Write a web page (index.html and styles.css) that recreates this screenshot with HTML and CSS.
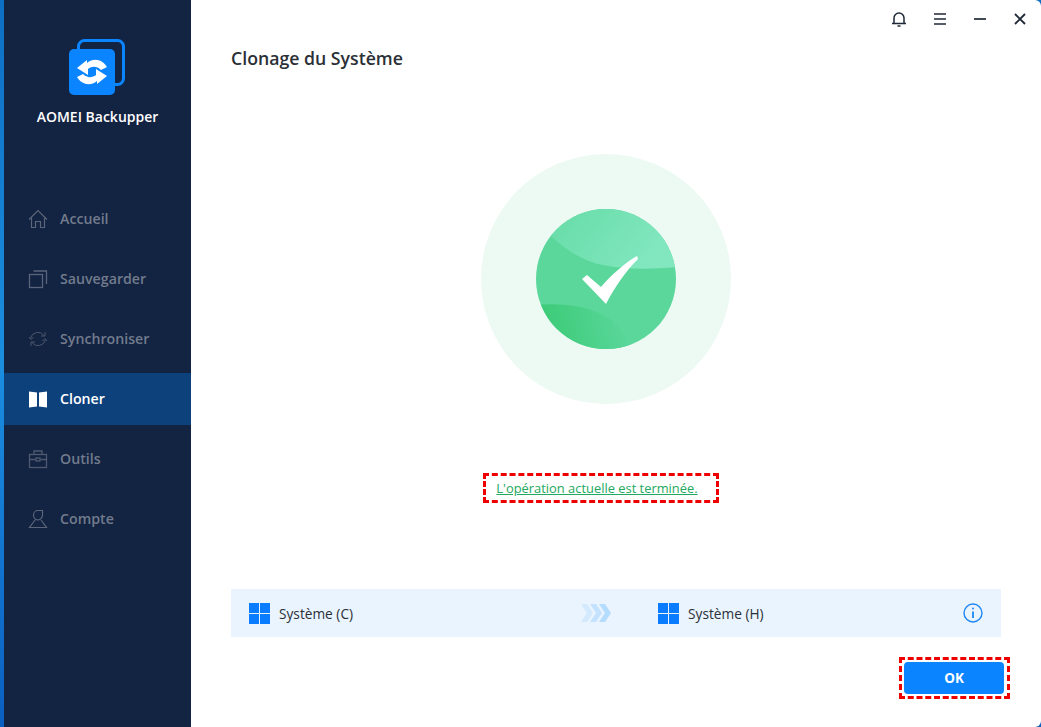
FILE: index.html
```html
<!DOCTYPE html>
<html lang="fr">
<head>
    <meta charset="UTF-8">
    <title>AOMEI Backupper</title>
    <link rel="stylesheet" href="styles.css">
</head>
<body>
    <div class="window">
        <aside class="sidebar">
            <div class="brand">
                <svg class="brand-logo" width="56" height="56" viewBox="0 0 56 56">
                    <rect x="9.500" y="1.500" width="45" height="44" rx="6" fill="none" stroke="#0a84ff" stroke-width="3"/>
                    <rect x="0" y="10" width="46" height="46" rx="5" fill="#0a84ff"/>
                    <path d="M8 29 18 21v3C25 18 34 21 38 28l-6 3c-4-4-9-4-13-1v6z" fill="#fff"/>
                    <path d="M8 29 18 21v3C25 18 34 21 38 28l-6 3c-4-4-9-4-13-1v6z" fill="#fff" transform="rotate(180 23 33)"/>
                </svg>
                <div class="brand-name">AOMEI Backupper</div>
            </div>
            <nav class="nav">
                <a class="nav-item">
                    <svg width="20" height="20" viewBox="0 0 20 20" fill="none" stroke="#5a6579" stroke-width="1.200">
                        <path d="M1 10.500 10 1.500l9 9M3.500 9v9.500h4v-6h5v6h4V9"/>
                    </svg>
                    <span>Accueil</span>
                </a>
                <a class="nav-item">
                    <svg width="20" height="20" viewBox="0 0 20 20" fill="none" stroke="#5a6579" stroke-width="1.300">
                        <rect x="1.500" y="5.500" width="13" height="13"/>
                        <path d="M5.500 2h13v13"/>
                    </svg>
                    <span>Sauvegarder</span>
                </a>
                <a class="nav-item">
                    <svg width="20" height="20" viewBox="0 0 20 20" fill="none" stroke="#4b566b" stroke-width="1">
                        <path d="M2.500 9.500A7.500 7.500 0 0 1 16 6.500M17.500 10.500A7.500 7.500 0 0 1 4 13.500"/>
                        <path d="M13 7h4V3M7 13H3v4M1 8l2 2.500L5.500 8M19 12l-2-2.500-2.500 2.500"/>
                    </svg>
                    <span>Synchroniser</span>
                </a>
                <a class="nav-item active">
                    <svg width="20" height="20" viewBox="0 0 20 20" fill="#fff">
                        <path d="M1 2.500 9 3.500v14l-8 1zM11 3.500l8-1v16l-8-1z"/>
                    </svg>
                    <span>Cloner</span>
                </a>
                <a class="nav-item">
                    <svg width="20" height="20" viewBox="0 0 20 20" fill="none" stroke="#4f5a70" stroke-width="1.300">
                        <rect x="1.500" y="5.500" width="17" height="13"/>
                        <path d="M6 5.500V2h8v3.500M1.500 10.500h6M12.500 10.500h6"/>
                        <rect x="8" y="9" width="4" height="3"/>
                    </svg>
                    <span>Outils</span>
                </a>
                <a class="nav-item">
                    <svg width="20" height="20" viewBox="0 0 20 20" fill="none" stroke="#5a6579" stroke-width="1.200">
                        <path d="M14.500 1.500H10a4.500 4.500 0 0 0-4.500 4.500c0 3 2 5 4.500 5s4.500-2.500 4.500-5zM7 11 1.500 18.500h17L13 11"/>
                    </svg>
                    <span>Compte</span>
                </a>
            </nav>
        </aside>
        <main class="main">
            <div class="titlebar">
                <svg width="16" height="16" viewBox="0 0 16 16" fill="none" stroke="#1f2937" stroke-width="1.500">
                    <path d="M1 12.500h14M3 12.500V7a5 5 0 0 1 10 0v5.500M6.500 15h3"/>
                </svg>
                <svg width="14" height="14" viewBox="0 0 14 14" fill="none" stroke="#1f2937" stroke-width="1.700">
                    <path d="M1 2h12M1 7h12M1 12h12"/>
                </svg>
                <svg width="14" height="14" viewBox="0 0 14 14" fill="none" stroke="#1f2937" stroke-width="1.700">
                    <path d="M1 7h12"/>
                </svg>
                <svg width="14" height="14" viewBox="0 0 14 14" fill="none" stroke="#1f2937" stroke-width="1.900">
                    <path d="M2 2l10 10M12 2 2 12"/>
                </svg>
            </div>
            <h1 class="page-title">Clonage du Système</h1>
            <div class="result">
                <svg class="result-icon" width="250" height="250" viewBox="0 0 250 250">
                    <defs>
                        <clipPath id="disc"><circle cx="125" cy="125" r="70"/></clipPath>
                        <linearGradient id="waveTop" x1="0" y1="0" x2="1" y2="0.500">
                            <stop offset="0" stop-color="#62daa4"/>
                            <stop offset="1" stop-color="#82e7bf"/>
                        </linearGradient>
                        <linearGradient id="waveBottom" x1="0.200" y1="0.500" x2="0.900" y2="0.400">
                            <stop offset="0" stop-color="#3ecc7a"/>
                            <stop offset="1" stop-color="#5bd79c"/>
                        </linearGradient>
                    </defs>
                    <circle cx="125" cy="125" r="125" fill="#edfaf4"/>
                    <circle cx="125" cy="125" r="70" fill="#5bd79c"/>
                    <g clip-path="url(#disc)">
                        <path d="M69 81c15 15 35 27 53 30 25 5 50 4 76 2V30H69z" fill="url(#waveTop)"/>
                        <path d="M58 151c20-2 52 0 72 15 15 12 25 30 30 50H50z" fill="url(#waveBottom)"/>
                    </g>
                    <path d="M101 125l5-4 14 12c10-12 24-24 36-31l1 3c-12 12-24 29-32 45z" fill="#fff"/>
                </svg>
                <div class="result-note">
                    <a class="result-link">L'opération actuelle est terminée.</a>
                </div>
            </div>
            <div class="clone-bar">
                <div class="clone-side">
                    <svg width="21" height="21" viewBox="0 0 21 21" fill="#0a7cff">
                        <path d="M0 0h10v10H0zM11 0h10v10H11zM0 11h10v10H0zM11 11h10v10H11z"/>
                    </svg>
                    <span>Système (C)</span>
                </div>
                <svg class="clone-arrows" width="30" height="18" viewBox="0 0 30 18">
                    <path d="M0 0h6l6 9-6 9H0l6-9z" fill="#d3e9fe"/>
                    <path d="M9 0h6l6 9-6 9H9l6-9z" fill="#c4e2fe"/>
                    <path d="M18 0h6l6 9-6 9h-6l6-9z" fill="#b4dcfe"/>
                </svg>
                <div class="clone-side">
                    <svg width="21" height="21" viewBox="0 0 21 21" fill="#0a7cff">
                        <path d="M0 0h10v10H0zM11 0h10v10H11zM0 11h10v10H0zM11 11h10v10H11z"/>
                    </svg>
                    <span>Système (H)</span>
                </div>
                <svg class="clone-info" width="20" height="20" viewBox="0 0 20 20" fill="none" stroke="#1f87f0" stroke-width="1.400">
                    <circle cx="10" cy="10" r="9"/>
                    <path d="M10 8.500V15" stroke-width="1.800"/>
                    <circle cx="10" cy="5.500" r="1" fill="#1f87f0" stroke="none"/>
                </svg>
            </div>
            <div class="actions">
                <div class="ok-mark">
                    <button class="ok-btn">OK</button>
                </div>
            </div>
        </main>
    </div>
</body>
</html>
```

FILE: styles.css
```css
* {
    box-sizing: border-box;
}

body {
    margin: 0;
    height: 727px;
    overflow: hidden;
    background: linear-gradient(180deg, #0d6fc4 0%, #1b8ee0 50%, #0a5fc0 100%);
    font-family: "Open Sans", "Noto Sans", sans-serif;
}

.window {
    display: flex;
    height: 727px;
    margin-left: 4px;
}

.sidebar {
    width: 187px;
    flex-shrink: 0;
    background: #132342;
}

.brand {
    display: flex;
    flex-direction: column;
    align-items: center;
    padding-top: 39px;
}

.brand-logo {
    display: block;
    margin-right: 1px;
}

.brand-name {
    margin-top: 12px;
    color: #fff;
    font-size: 14px;
    font-weight: 600;
    line-height: 20px;
}

.nav {
    display: flex;
    flex-direction: column;
    gap: 8px;
    margin-top: 66px;
}

.nav-item {
    display: flex;
    align-items: center;
    gap: 12px;
    height: 52px;
    padding-left: 24px;
    color: #717b8c;
    font-size: 14.200px;
    font-weight: 600;
}

.nav-item span {
    margin-bottom: 1px;
}

.nav-item.active {
    background: #0c417c;
    color: #fff;
}

.main {
    flex: 1;
    display: flex;
    flex-direction: column;
    padding: 0 40px;
    background: #fff;
    border-radius: 0 6px 6px 0;
}

.titlebar {
    display: flex;
    justify-content: flex-end;
    align-items: center;
    gap: 26px;
    height: 38px;
    margin-right: -26px;
}

.page-title {
    margin: 8px 0 0;
    color: #2b2f36;
    font-size: 17.700px;
    font-weight: 600;
    line-height: 24px;
}

.result {
    display: flex;
    flex-direction: column;
    align-items: center;
    margin-top: 84px;
    padding-right: 20px;
}

.result-icon {
    display: block;
}

.result-note {
    margin: 69px 10px 0 0;
    width: 236px;
    height: 30px;
    padding: 0 8px 1px 0;
    border: 3px dashed #ee0000;
    display: flex;
    align-items: center;
    justify-content: center;
}

.result-link {
    color: #22a860;
    font-size: 12.900px;
    line-height: 18px;
    text-decoration: underline;
}

.clone-bar {
    display: flex;
    align-items: center;
    height: 48px;
    margin-top: 86px;
    padding: 0 18px;
    background: #e9f4fe;
}

.clone-side {
    display: flex;
    align-items: center;
    gap: 9px;
    color: #2b2f36;
    font-size: 13.700px;
    font-weight: 500;
}

.clone-side span {
    margin-top: 1px;
}

.clone-arrows {
    margin: 0 47px 0 228px;
}

.clone-info {
    margin-left: auto;
}

.actions {
    display: flex;
    justify-content: flex-end;
    margin-top: 20px;
    margin-right: -9px;
}

.ok-mark {
    padding: 2px 3px 2px 2px;
    border: 3px dashed #ee0000;
}

.ok-btn {
    display: block;
    width: 100px;
    height: 32px;
    border: none;
    border-radius: 4px;
    background: #0a84ff;
    color: #fff;
    font-family: inherit;
    font-size: 13.500px;
    font-weight: 700;
}
```
